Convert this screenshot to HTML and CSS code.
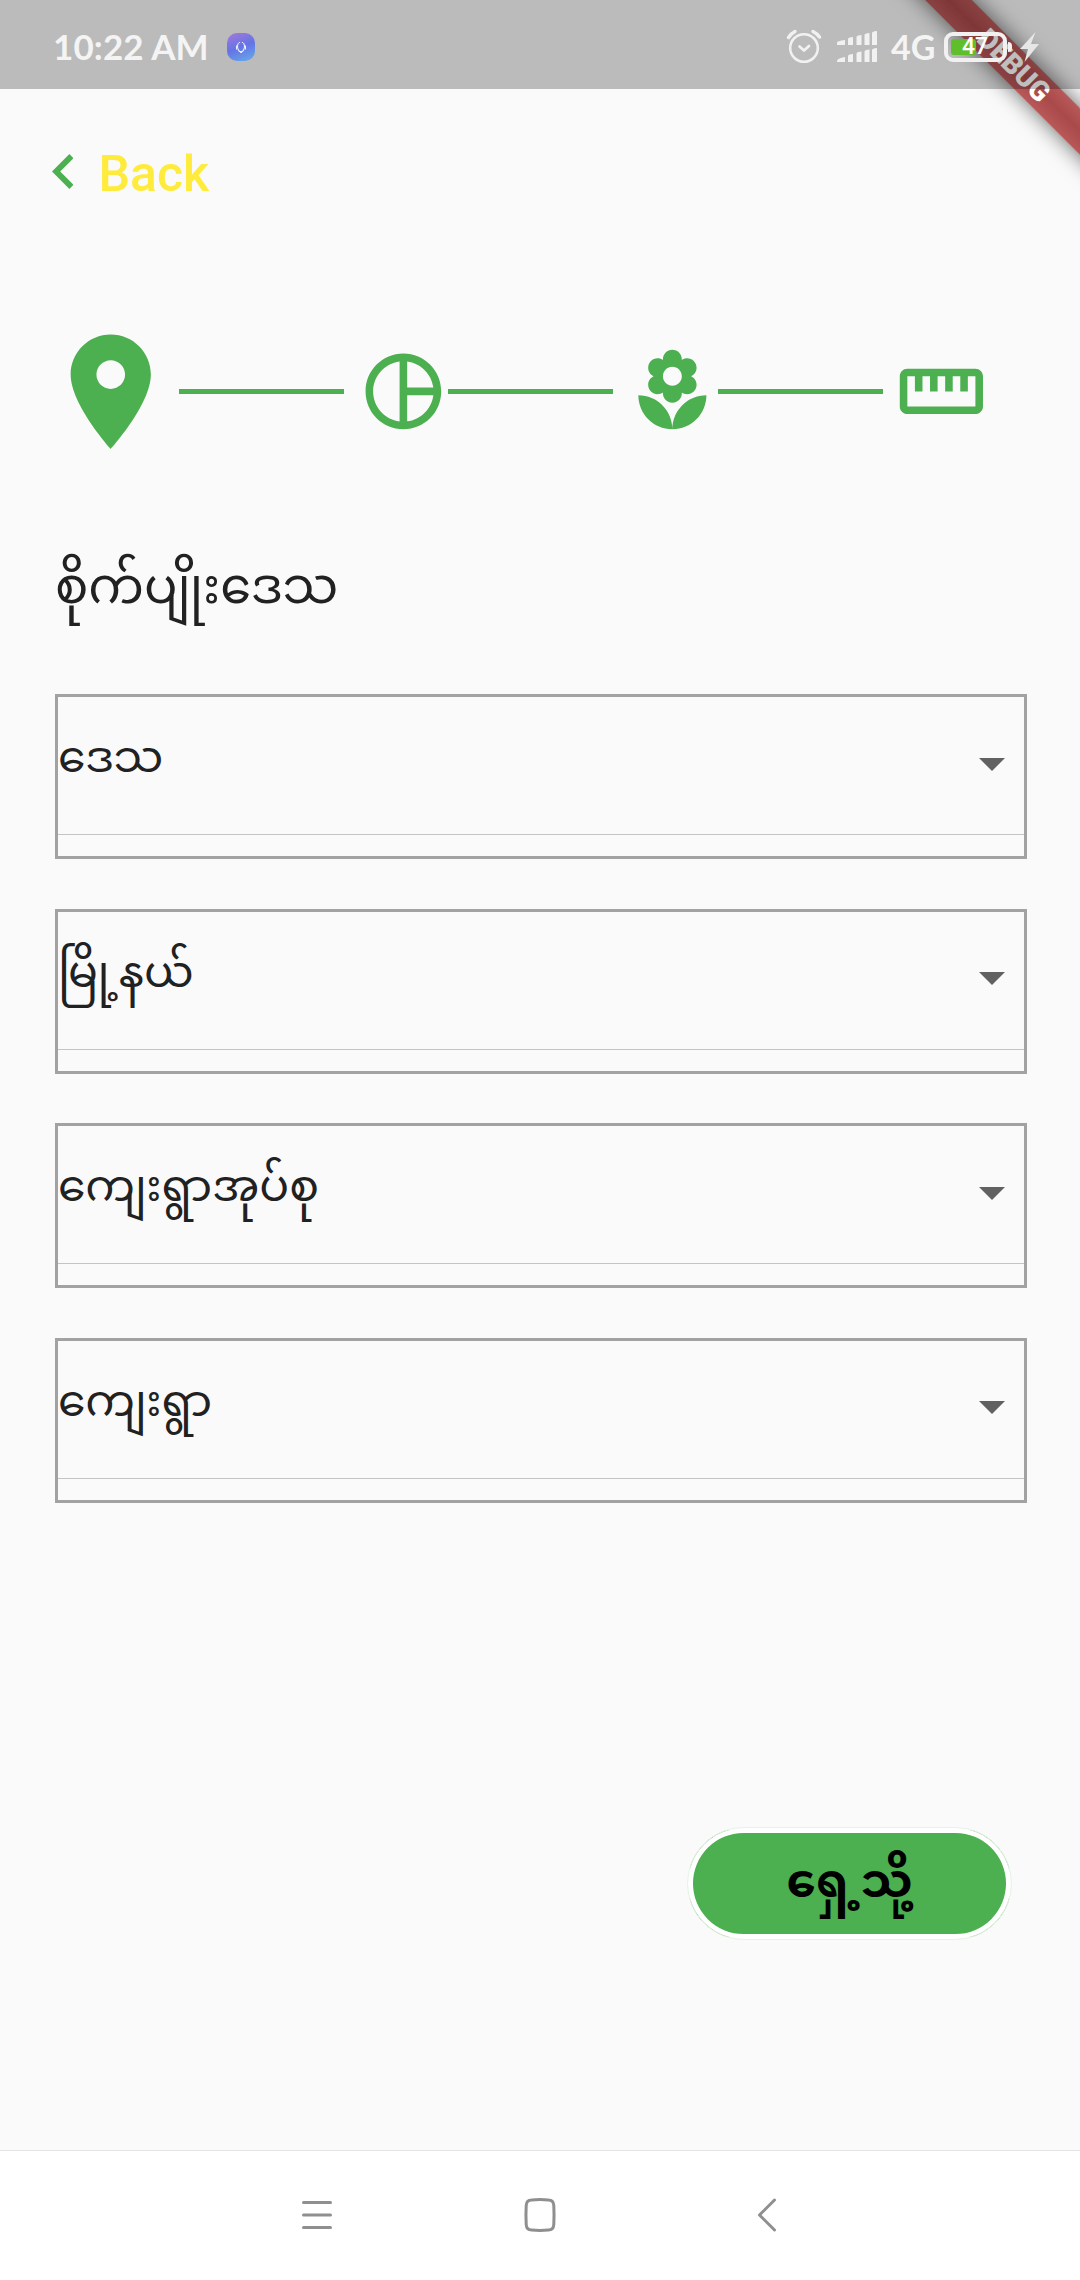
FILE: index.html
```html
<!DOCTYPE html>
<html lang="my">
<head>
<meta charset="utf-8">
<title>စိုက်ပျိုးဒေသ</title>
<link rel="stylesheet" href="styles.css">
</head>
<body>
<div class="screen">
  <header class="status">
    <span class="clock">10:22 AM</span>
    <svg class="app-badge" viewBox="0 0 28 28">
      <defs>
        <linearGradient id="badge" x1="0.3" y1="0" x2="0.7" y2="1">
          <stop offset="0" stop-color="#9a78dc"/><stop offset="0.5" stop-color="#6474e6"/><stop offset="1" stop-color="#66a4e6"/>
        </linearGradient>
      </defs>
      <rect width="28" height="28" rx="10" fill="url(#badge)"/>
      <path d="M11.5 10C10 12 10 16 12.5 18.5h3C18 16 18 12 16.500 10M9.500 12.500v4M18.500 12.500v4M13 19.500h2M12.500 9v1M15.500 9v1" fill="none" stroke="#e8ecff" stroke-width="1.100"/>
    </svg>
    <span class="spacer"></span>
    <svg class="alarm" viewBox="0 0 36 36" fill="none" stroke="#f1f1f1" stroke-linecap="round">
      <circle cx="18" cy="19" r="13.800" stroke-width="2.500"/>
      <path d="M13.500 17.500l4.500 4 5-4.500" stroke-width="2.700" stroke-linejoin="round"/>
      <path d="M2.500 8.500Q5 4.500 9 2.500M27 2.500Q31 4.500 33.500 8" stroke-width="3.500"/>
    </svg>
    <svg class="signal" viewBox="0 0 41 32" fill="#f1f1f1">
      <path d="M0 11.500q0-1.500 8-2.500v5H0zM11 8q0-1.500 5-2v8h-5zM19.500 6q0-1.500 5-2v10h-5zM27.500 4q0-1.500 5-2v12h-5zM35 2q0-1.500 5-2v14h-5z"/>
      <path d="M0 30q0-2.500 8-4v5H0zM11 25q0-1.500 5-2v8h-5zM19.500 22.500q0-1.500 5-2V31h-5zM27.500 20.500q0-1.500 5-2V31h-5zM35 19q0-1.500 5-2v14h-5z"/>
    </svg>
    <span class="network">4G</span>
    <div class="battery"><span class="battery-level"></span><span class="battery-text">47</span></div>
    <span class="battery-tip"></span>
    <svg class="bolt" viewBox="0 0 19 30"><path d="M15.500 0L0 17h8L4.500 30 19 12h-8z" fill="#e6e6e6"/></svg>
  </header>

  <div class="ribbon-clip"><div class="ribbon">DEBUG</div></div>

  <main class="page">
    <div class="back">
      <svg class="back-icon" viewBox="8 6 7.410 12"><path d="M15.410 7.410L14 6l-6 6 6 6 1.410-1.410L10.830 12z" fill="#4caf50"/></svg>
      <span class="back-label">Back</span>
    </div>

    <div class="steps">
      <svg class="step-icon step-current" viewBox="0 0 24 24"><path d="M12 2C8.130 2 5 5.130 5 9c0 5.250 7 13 7 13s7-7.750 7-13c0-3.870-3.130-7-7-7zm0 9.500c-1.380 0-2.500-1.120-2.500-2.500s1.120-2.500 2.500-2.500 2.500 1.120 2.500 2.500-1.120 2.500-2.500 2.500z"/></svg>
      <span class="step-line"></span>
      <svg class="step-icon step-next" viewBox="0 0 24 24"><path d="M12 2C6.480 2 2 6.480 2 12s4.480 10 10 10 10-4.480 10-10S17.520 2 12 2zm1 2.070c3.610.450 6.480 3.330 6.930 6.930H13V4.070zM4 12c0-4.060 3.070-7.440 7-7.930v15.870c-3.930-.500-7-3.880-7-7.940zm9 7.930V13h6.930c-.450 3.610-3.320 6.480-6.930 6.930z"/></svg>
      <span class="step-line"></span>
      <svg class="step-icon step-next" viewBox="0 0 24 24"><path d="M12 22c4.970 0 9-4.030 9-9-4.970 0-9 4.030-9 9zM5.600 10.250c0 1.380 1.120 2.500 2.500 2.500.530 0 1.010-.160 1.420-.440l-.020.190c0 1.380 1.120 2.500 2.500 2.500s2.500-1.120 2.500-2.500l-.020-.190c.400.280.890.440 1.420.440 1.380 0 2.500-1.120 2.500-2.500 0-1-.590-1.850-1.430-2.250.840-.400 1.430-1.250 1.430-2.250 0-1.380-1.120-2.500-2.500-2.500-.530 0-1.010.160-1.420.440l.020-.190C14.500 2.120 13.380 1 12 1S9.500 2.120 9.500 3.500l.020.190c-.400-.280-.890-.440-1.420-.440-1.380 0-2.500 1.120-2.500 2.500 0 1 .590 1.850 1.430 2.250-.840.400-1.430 1.250-1.430 2.250zM12 5.500c1.380 0 2.500 1.120 2.500 2.500s-1.120 2.500-2.500 2.500S9.500 9.380 9.500 8s1.120-2.500 2.500-2.500zM3 13c0 4.970 4.030 9 9 9 0-4.970-4.030-9-9-9z"/></svg>
      <span class="step-line"></span>
      <svg class="step-icon step-next" viewBox="0 0 24 24"><path d="M21 6H3c-1.100 0-2 .900-2 2v8c0 1.100.900 2 2 2h18c1.100 0 2-.900 2-2V8c0-1.100-.900-2-2-2zm0 10H3V8h2v4h2V8h2v4h2V8h2v4h2V8h2v4h2V8h2v8z"/></svg>
    </div>

    <h1 class="title">စိုက်ပျိုးဒေသ</h1>

    <div class="fields">
      <div class="field"><div class="field-row"><span>ဒေသ</span><i class="caret"></i></div></div>
      <div class="field"><div class="field-row"><span>မြို့နယ်</span><i class="caret"></i></div></div>
      <div class="field"><div class="field-row"><span>ကျေးရွာအုပ်စု</span><i class="caret"></i></div></div>
      <div class="field"><div class="field-row"><span>ကျေးရွာ</span><i class="caret"></i></div></div>
    </div>

    <button class="next">ရှေ့သို့</button>
  </main>

  <nav class="navbar">
    <svg viewBox="0 0 34 36" class="nav-icon nav-menu"><path d="M3.500 5.500h27M3.500 18h27M3.500 30.500h27"/></svg>
    <svg viewBox="0 0 34 36" class="nav-icon nav-home"><path d="M8.500 3Q17 2.200 25.500 3Q30.500 3 30.800 8.500Q31.300 18 30.800 27.500Q30.500 33 25.500 33Q17 33.800 8.500 33Q3.500 33 3.200 27.500Q2.700 18 3.200 8.500Q3.500 3 8.500 3z"/></svg>
    <svg viewBox="0 0 20 36" class="nav-icon nav-back"><path d="M17.500 3L2.500 18l15 15"/></svg>
  </nav>
</div>
</body>
</html>
```
FILE: styles.css
```css
* { box-sizing: border-box; }
body { margin: 0; background: #fafafa; }

.screen {
  position: relative;
  display: flex;
  flex-direction: column;
  width: 1080px;
  height: 2280px;
  overflow: hidden;
  background: #fafafa;
  color: #212121;
  font-family: Roboto, "Noto Sans Myanmar", Padauk, "Noto Sans", sans-serif;
}

/* Status bar: a translucent scrim over the app and its ribbon */
.status {
  position: relative;
  z-index: 2;
  display: flex;
  align-items: center;
  flex: none;
  height: 89px;
  padding: 5px 41px 0 53px;
  background: rgba(0, 0, 0, .25);
  color: #f4f4f4;
  font-family: Lato, sans-serif;
  font-weight: 700;
}
.clock { width: 174px; margin-top: -2px; font-size: 35px; letter-spacing: .1px; white-space: nowrap; }
.app-badge { width: 28px; height: 28px; }
.spacer { flex: 1; }
.alarm { width: 36px; height: 36px; margin-right: 15px; }
.signal { width: 41px; height: 32px; margin-right: 13px; }
.network { width: 53px; font-size: 34px; line-height: 40px; }
.battery {
  display: flex;
  align-items: center;
  position: relative;
  width: 63px;
  height: 30px;
  padding: 3px;
  border: 4px solid #f1f1f1;
  border-radius: 9px;
}
.battery-level { width: 25px; height: 16px; border-radius: 3px; background: #5fbf2b; }
.battery-text { position: absolute; left: 14px; top: 0; font: 500 23px/22px Roboto, sans-serif; color: #fff; }
.battery-tip { width: 4px; height: 10px; margin: 0 8px 0 1px; border-radius: 0 4px 4px 0; background: #f1f1f1; }
.bolt { width: 19px; height: 30px; }

.ribbon-clip { position: absolute; z-index: 1; right: 0; top: 0; width: 250px; height: 250px; overflow: hidden; }
.ribbon {
  position: absolute;
  left: 34px;
  top: 48.500px;
  width: 300px;
  height: 33px;
  transform: rotate(45deg);
  background: linear-gradient(rgba(181, 78, 78, .94), rgba(166, 66, 66, .96) 50%, rgba(181, 78, 78, .94));
  box-shadow: 0 0 22px rgba(0, 0, 0, .6);
  color: #fff;
  font: 900 28px/33px Roboto, sans-serif;
  text-align: center;
}

.page { display: flex; flex-direction: column; flex: 1; padding: 43px 53px 0 55px; }

.back { display: flex; align-items: center; height: 80px; margin-left: -3.500px; }
.back-icon { width: 21.500px; height: 35px; margin: -1px 25.500px 0 0; }
.back-label { color: #ffeb3b; font-size: 50px; font-weight: 500; line-height: 80px; padding-top: 4px; }

.steps { display: flex; align-items: center; height: 137.500px; margin: 110.500px 0 0 -13.500px; }
.step-icon { flex: none; fill: #4caf50; }
.step-current { width: 137.500px; height: 137.500px; }
.step-next { width: 90.750px; height: 90.750px; }
.step-line { flex: none; width: 165px; height: 5.500px; background: #4caf50; }
.step-line + .step-next { margin-left: 13.500px; }

.title { height: 110px; margin: 71px 0 0; font-size: 49.500px; font-weight: 400; line-height: 110px; white-space: nowrap; }

.fields { display: grid; grid-auto-rows: 165px; gap: 49.500px; margin-top: 53px; }
.field { border: 3px solid #a2a2a2; }
.field-row {
  display: flex;
  align-items: center;
  justify-content: space-between;
  height: 138px;
  padding-right: 19.500px;
  border-bottom: 1.500px solid #c4c4c4;
  font-size: 44.200px;
  line-height: 120px;
}
.field-row span { padding-bottom: 17px; }
.caret { width: 0; height: 0; margin-bottom: 2.500px; border: 13.750px solid transparent; border-top-color: #616161; border-bottom: 0; }

.next {
  align-self: flex-end;
  width: 325px;
  height: 113px;
  margin: 324.500px 15px 0 0;
  padding: 0 0 5px;
  border: 1px solid #e6f2e6;
  border-radius: 57px;
  background: linear-gradient(#4caf50, #4caf50) center / calc(100% - 4px) calc(100% - 4px) no-repeat #fff;
  box-shadow: inset 0 0 0 5px #fff;
  color: #000;
  font-family: inherit;
  font-size: 46.750px;
  font-weight: 700;
  line-height: 100px;
}

.navbar {
  display: flex;
  align-items: center;
  flex: none;
  height: 130px;
  padding: 0 303px 2px 300px;
  border-top: 1px solid #e3e3e3;
  background: #fff;
}
.nav-icon { height: 36px; fill: none; stroke: #8f8f8f; stroke-width: 3; stroke-linecap: round; stroke-linejoin: round; }
.nav-menu { width: 34px; }
.nav-home { width: 34px; margin: 0 auto 0 189px; }
.nav-back { width: 20px; }
```
